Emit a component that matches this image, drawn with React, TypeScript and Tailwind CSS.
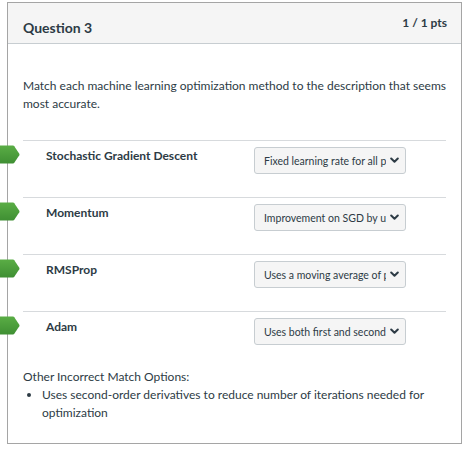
import React from "react";

const rows = [
  { label: "Stochastic Gradient Descent", value: "Fixed learning rate for all parameters" },
  { label: "Momentum", value: "Improvement on SGD by using velocity" },
  { label: "RMSProp", value: "Uses a moving average of past squared gradients" },
  { label: "Adam", value: "Uses both first and second moments" },
];

function Arrow() {
  return (
    <svg width="20" height="19" viewBox="0 0 20 19" className="absolute left-[-23px] top-[4px]">
      <defs>
        <linearGradient id="g" x1="0" y1="0" x2="0" y2="1">
          <stop offset="0" stopColor="#5aad45" />
          <stop offset="1" stopColor="#3f8f33" />
        </linearGradient>
      </defs>
      <path d="M0 0.5 H13 Q13.8 0.5 14.3 1.2 L19.3 8.8 Q19.7 9.5 19.3 10.2 L14.3 17.8 Q13.8 18.5 13 18.5 H0 Z" fill="url(#g)" />
    </svg>
  );
}

function Chevron() {
  return (
    <svg width="9" height="7" viewBox="0 0 9 7" className="shrink-0">
      <path d="M1.2 1.5 L4.5 4.8 L7.8 1.5" fill="none" stroke="#2d3b45" strokeWidth="2" strokeLinecap="round" strokeLinejoin="round" />
    </svg>
  );
}

export default function App() {
  return (
    <div className="w-[473px] h-[456px] bg-white pt-[2px] pl-[7px]" style={{ fontFamily: "Lato, 'Noto Sans', sans-serif" }}>
      <div className="w-[455px] h-[442px] border border-[#a5a5a5] text-[#2d3b45] flex flex-col">
        <div className="h-[41px] bg-[#f5f5f5] border-b border-[#c7cdd1] flex justify-between items-start pt-[12px] pl-[15px] pr-[14px]">
          <div className="mt-[3px] text-[14px] leading-[20px] font-bold">Question 3</div>
          <div className="text-[12px] leading-[16px] font-bold">1 / 1 pts</div>
        </div>
        <div className="px-[15px] pt-[33px]">
          <p className="text-[12px] leading-[18px]">
            Match each machine learning optimization method to the description that seems most accurate.
          </p>
          <div className="mt-[27px]">
            {rows.map((r) => (
              <div key={r.label} className="relative h-[57px] border-t border-[#d7dadd] flex justify-between pl-[23px] pr-[40px]">
                <Arrow />
                <div className="pt-[7px] text-[12px] leading-[16px] font-bold">{r.label}</div>
                <div className="mt-[6px] w-[152px] h-[27px] bg-[#f5f5f5] border border-[#c7cdd1] rounded-[3px] flex items-center pl-[9px] pr-[6px] gap-[4px]">
                  <div className="flex-1 overflow-hidden whitespace-nowrap text-[10.5px] leading-[14px]">{r.value}</div>
                  <Chevron />
                </div>
              </div>
            ))}
          </div>
          <div className="text-[12px] leading-[18px]">
            <div>Other Incorrect Match Options:</div>
            <ul className="list-disc pl-[19px]">
              <li>Uses second-order derivatives to reduce number of iterations needed for optimization</li>
            </ul>
          </div>
        </div>
      </div>
    </div>
  );
}
